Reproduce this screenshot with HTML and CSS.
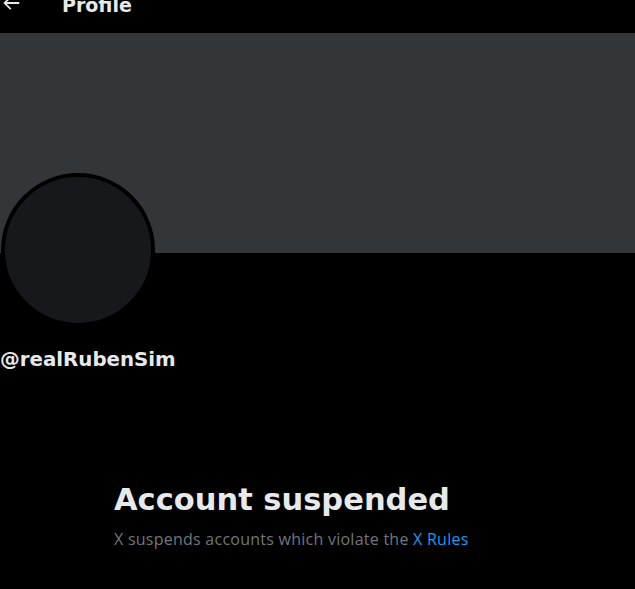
FILE: index.html
```html
<!DOCTYPE html>
<html>
<head>
<meta charset="utf-8">
<link rel="stylesheet" href="styles.css">
</head>
<body>
<div class="page">
  <header class="topbar">
    <div class="back">
      <svg viewBox="0 0 24 24" width="22" height="22"><path fill="#e7e9ea" d="M7.414 13l5.043 5.04-1.414 1.42L3.586 12l7.457-7.46 1.414 1.42L7.414 11H21v2H7.414z"/></svg>
    </div>
    <h2 class="title">Profile</h2>
  </header>
  <div class="banner"></div>
  <div class="profile">
    <div class="avatar"></div>
    <div class="handle">@realRubenSim</div>
  </div>
  <section class="notice">
    <h1 class="notice-title">Account suspended</h1>
    <p class="notice-text">X suspends accounts which violate the <a href="#" class="link">X Rules</a></p>
  </section>
</div>
</body>
</html>
```
FILE: styles.css
```css
html, body {
  margin: 0;
  padding: 0;
  background: #000;
  height: 100%;
  overflow: hidden;
}
body {
  font-family: "DejaVu Sans", sans-serif;
  color: #e7e9ea;
}
.page {
  margin-top: -20px;
}
.topbar {
  height: 53px;
  display: flex;
  align-items: center;
  padding-left: 0;
}
.back {
  width: 22px;
  height: 22px;
  display: flex;
  align-items: center;
  justify-content: center;
  margin-top: -7px;
}
.back svg {
  display: block;
}
.title {
  margin: -4px 0 0 40px;
  font-size: 19px;
  font-weight: 700;
  line-height: 24px;
}
.banner {
  height: 220px;
  background: #333639;
}
.profile {
  margin-top: -80px;
}
.avatar {
  width: 146px;
  height: 146px;
  border-radius: 50%;
  background: #16181c;
  border: 4px solid #000;
  margin-left: 1px;
}
.handle {
  margin-top: 21px;
  font-size: 19.8px;
  font-weight: 700;
  line-height: 24px;
}
.notice {
  margin-top: 110px;
  padding-left: 114px;
}
.notice-title {
  margin: 0;
  font-size: 30.5px;
  font-weight: 700;
  line-height: 36px;
}
.notice-text {
  margin: 11px 0 0;
  font-family: "Open Sans", sans-serif;
  font-size: 16px;
  letter-spacing: 0.25px;
  line-height: 20px;
  color: #71767b;
}
.link {
  color: #1d9bf0;
  text-decoration: none;
}
```
